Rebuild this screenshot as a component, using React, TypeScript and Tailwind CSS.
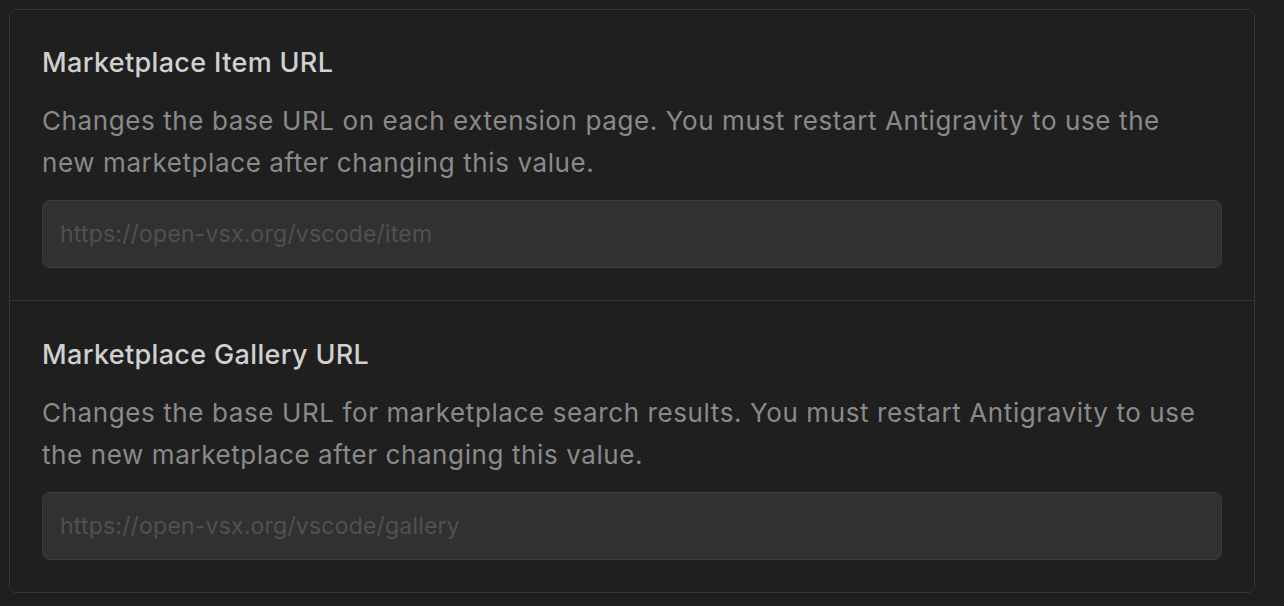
const SETTINGS = [
  {
    title: "Marketplace Item URL",
    desc: "Changes the base URL on each extension page. You must restart Antigravity to use the new marketplace after changing this value.",
    placeholder: "https://open-vsx.org/vscode/item",
  },
  {
    title: "Marketplace Gallery URL",
    desc: "Changes the base URL for marketplace search results. You must restart Antigravity to use the new marketplace after changing this value.",
    placeholder: "https://open-vsx.org/vscode/gallery",
  },
];

export default function App() {
  return (
    <div
      className="min-h-[606px] w-full bg-[#1f1f1f] pt-[9px] pl-[9px]"
      style={{ fontFamily: "Inter, 'Noto Sans', sans-serif" }}
    >
      <div className="w-[1246px] rounded-[7px] border border-[#373737] bg-[#1f1f1f]">
        {SETTINGS.map((s, i) => (
          <div
            key={s.title}
            className={
              i > 0
                ? "border-t border-[#373737] px-[32px] pt-[36px] pb-[32px]"
                : "px-[32px] pt-[35px] pb-[32px]"
            }
          >
            <div className="text-[27px] leading-[36px] font-medium tracking-[0.35px] text-[#d0d0d0]">
              {s.title}
            </div>
            <p className="mt-[19px] pr-[18px] text-[26px] leading-[42px] tracking-[0.6px] text-[#8a8a8a]">
              {s.desc}
            </p>
            <input
              type="text"
              placeholder={s.placeholder}
              className="mt-[16px] block h-[68px] w-full rounded-[8px] border border-[#3e3e42] bg-[#313131] px-[17px] text-[23px] tracking-[0.2px] text-[#cccccc] outline-none placeholder:text-[#505055]"
            />
          </div>
        ))}
      </div>
    </div>
  );
}
